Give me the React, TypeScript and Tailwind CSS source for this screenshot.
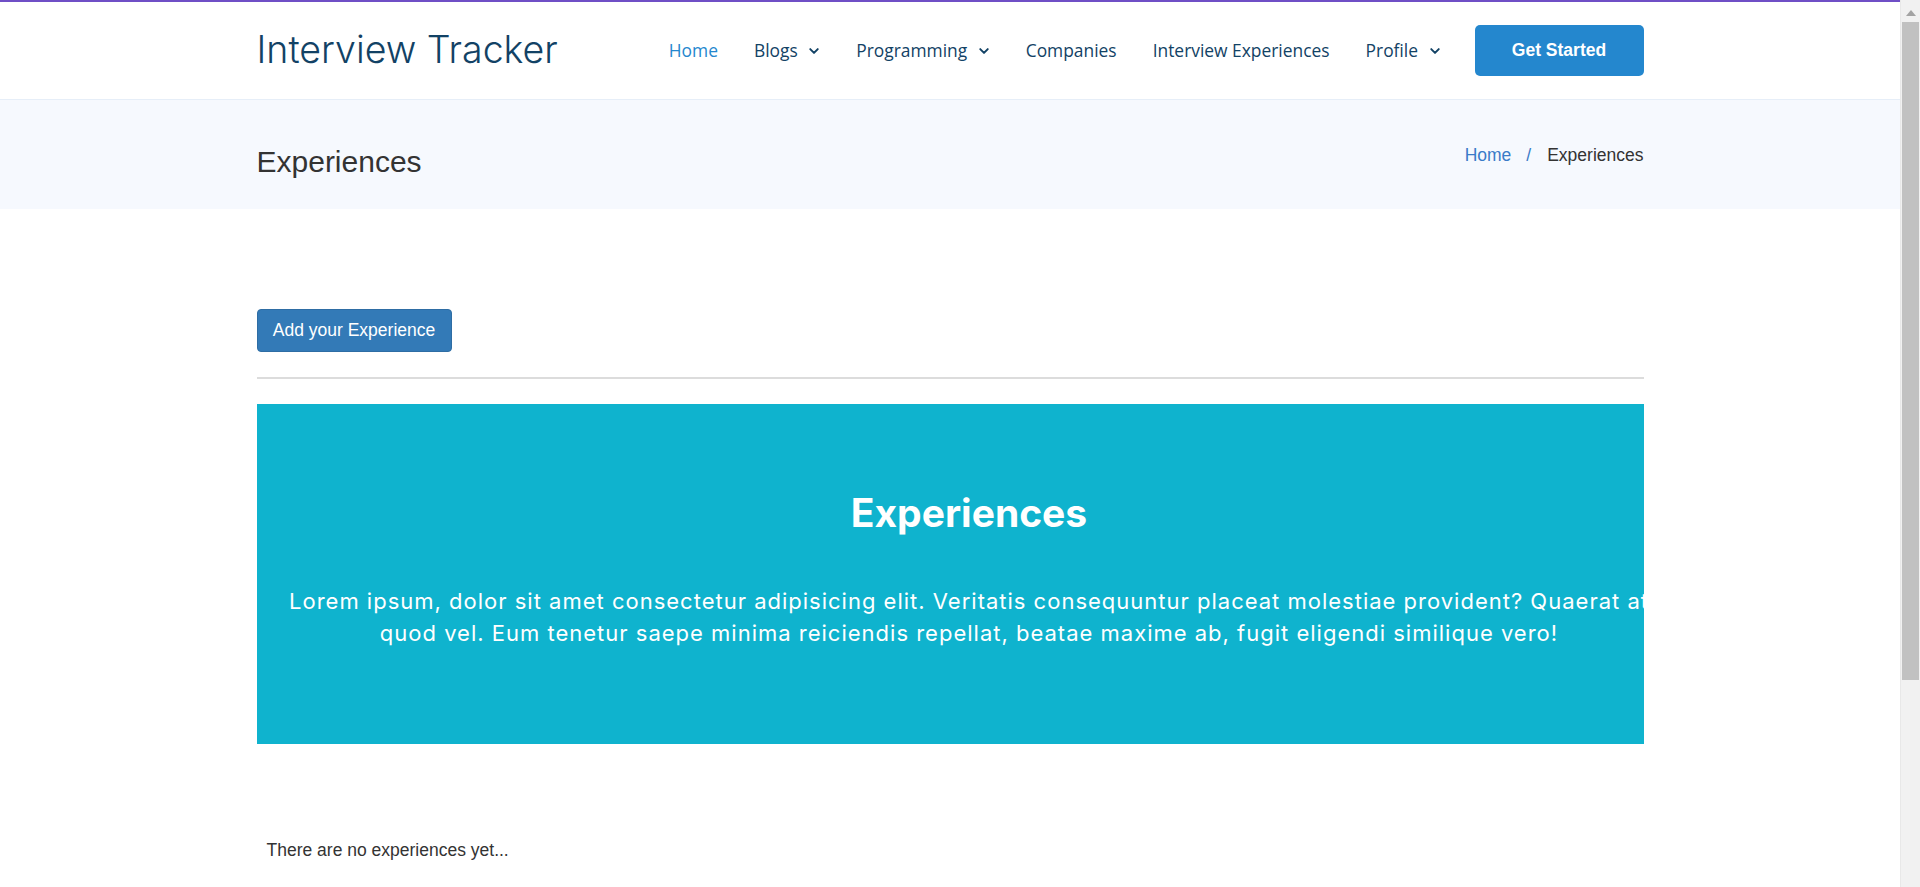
import React from "react";

function Chevron() {
  return (
    <svg width="12" height="12" viewBox="0 0 16 16" className="ml-[10.5px] mt-[1px]" fill="none">
      <path d="M3 5.5l5 5 5-5" stroke="#124265" strokeWidth="2.6" strokeLinecap="round" strokeLinejoin="round" />
    </svg>
  );
}

export default function App() {
  const nav = [
    { label: "Home", active: true, drop: false },
    { label: "Blogs", drop: true },
    { label: "Programming", drop: true },
    { label: "Companies", drop: false },
    { label: "Interview Experiences", drop: false },
    { label: "Profile", drop: true },
  ];
  return (
    <div className="flex h-[887px] w-full overflow-hidden bg-white">
      <div className="flex min-w-0 flex-1 flex-col overflow-hidden">
        <div className="h-[2px] bg-[#6f4fc6]" />
        <header className="flex h-[98px] items-center border-b border-[#e6eef8] bg-white">
          <div className="mx-auto flex w-[1387px] items-center justify-between">
            <div className="-mt-[2px] font-['Inter',sans-serif] text-[37.5px] font-light leading-none text-[#124265]">Interview Tracker</div>
            <div className="flex items-center">
              <nav className="flex items-center gap-[36px] font-['Open_Sans',sans-serif] text-[17.4px]">
                {nav.map((n) => (
                  <div key={n.label} className={`flex items-center ${n.active ? "text-[#2487ce]" : "text-[#124265]"}`}>
                    <span>{n.label}</span>
                    {n.drop && <Chevron />}
                  </div>
                ))}
              </nav>
              <button className="ml-[34px] flex h-[51px] w-[169px] items-center justify-center rounded-[5px] bg-[#2487ce] font-['Liberation_Sans',Arial,sans-serif] text-[17.5px] font-bold text-white">
                Get Started
              </button>
            </div>
          </div>
        </header>
        <section className="flex h-[109px] items-center bg-[#f6f9fe]">
          <div className="mx-auto flex w-[1387px] items-center justify-between font-['Liberation_Sans',Arial,sans-serif]">
            <h2 className="pt-[14px] text-[30px] leading-[34px] text-[#333333]">Experiences</h2>
            <div className="mt-[2px] flex items-center text-[17.5px] text-[#333333]">
              <span className="text-[#3a7bc8]">Home</span>
              <span className="pl-[15px] pr-[14px] text-[#3a7bc8]">/</span>
              <span className="pl-[2px]">Experiences</span>
            </div>
          </div>
        </section>
        <main className="mx-auto w-[1387px] font-['Liberation_Sans',Arial,sans-serif]">
          <div className="pt-[100px]">
            <button className="h-[43px] w-[195px] rounded-[4px] border border-[#2e6da4] bg-[#337ab7] text-[17.5px] text-white">
              Add your Experience
            </button>
          </div>
          <div className="mt-[25px] h-[2px] bg-[#dcdcdc]" />
          <div className="mt-[25px] h-[340px] bg-[#0fb3ce] pt-[85px]">
            <div className="ml-[19px] w-full text-center font-['Inter',sans-serif] text-white">
              <h1 className="text-[39px] font-bold leading-[48px]">Experiences</h1>
              <p className="mt-[48px] text-[22px] leading-[32px] tracking-[1px]">
                Lorem ipsum, dolor sit amet consectetur adipisicing elit. Veritatis consequuntur placeat molestiae provident? Quaerat at quod vel. Eum tenetur saepe minima reiciendis repellat, beatae maxime ab, fugit eligendi similique vero!
              </p>
            </div>
          </div>
          <p className="mt-[94px] pl-[10px] text-[17.5px] leading-[24px] text-[#333333]">There are no experiences yet...</p>
        </main>
      </div>
      <div className="flex h-[887px] w-[20px] flex-col items-center border-l border-[#e8e8e8] bg-[#f1f1f1]">
        <svg width="10" height="6" viewBox="0 0 10 6" className="mt-[10px]">
          <path d="M0 6L5 0L10 6Z" fill="#a3a3a3" />
        </svg>
        <div className="mt-[6px] h-[658px] w-[17px] bg-[#c1c1c1]" />
      </div>
    </div>
  );
}
